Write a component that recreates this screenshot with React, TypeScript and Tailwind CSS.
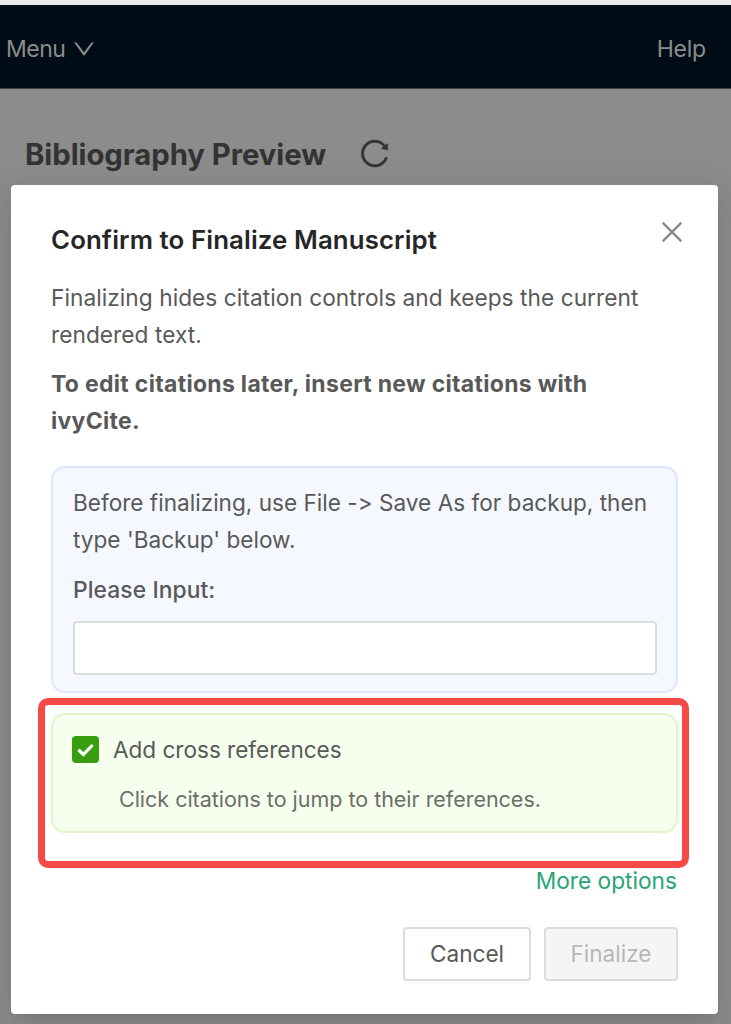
import { AiOutlineClose, AiOutlineDown, AiOutlineReload } from "react-icons/ai";

function Header() {
  return (
    <header className="flex h-[84px] items-center justify-between border-b border-[#3c444b] bg-[#000c17] pl-[6px] pr-[25px] text-[#8c8c8c]">
      <button className="flex items-center gap-[6px] whitespace-nowrap pt-[4px]">
        <span className="pt-px text-[23px] leading-9 tracking-[-0.5px]">Menu</span>
        <AiOutlineDown className="size-[26px]" />
      </button>
      <button className="whitespace-nowrap pt-[5px] text-[23px] leading-9 tracking-[-0.2px]">Help</button>
    </header>
  );
}

function BackupPanel() {
  return (
    <section className="mt-[26px] h-[227px] rounded-[14px] border-2 border-[#dfe6fc] bg-[#f5f8ff] px-[20px] pt-[17px]">
      <p className="whitespace-nowrap text-[22.6px] leading-[36.7px] tracking-[0px] [font-feature-settings:'calt'_0]">
        Before finalizing, use File -&gt; Save As for backup, then
        <br />
        type 'Backup' below.
      </p>
      <label className="mt-[14px] block">
        <span className="block text-[22.8px] font-medium leading-[36.7px] tracking-[0.1px]">Please Input:</span>
        <input className="mt-[12px] block h-[54px] w-[584px] rounded-[4px] border-2 border-[#dcdde0] bg-white px-4 outline-none" />
      </label>
    </section>
  );
}

function CrossReferencePanel() {
  return (
    <section className="relative mt-[20px] h-[120px] rounded-[14px] border-2 border-[#dff6c8] bg-[#f6ffed] px-[19px] pt-[17px]">
      <div className="flex h-[36px] items-center gap-[14px]">
        <span className="flex size-[27px] items-center justify-center rounded-[4px] bg-[#389e0d]">
          <svg viewBox="0 0 27 27" className="size-[27px]" fill="none" stroke="white" strokeWidth="3.2">
            <path d="M6.4 13.8 11.4 18.4 20.6 9" />
          </svg>
        </span>
        <span className="whitespace-nowrap pt-px text-[22.6px] tracking-[-0.03px]">Add cross references</span>
      </div>
      <p className="mt-[13px] whitespace-nowrap pl-[47px] text-[21.5px] leading-9 tracking-[-0.02px] text-[#6b6f68]">
        Click citations to jump to their references.
      </p>
      <div className="pointer-events-none absolute -left-[15px] -right-[13px] -top-[17px] h-[170px] rounded-[10px] border-[7px] border-[#f54a45]" />
    </section>
  );
}

function FinalizeDialog() {
  return (
    <div
      role="dialog"
      className="absolute left-[11px] top-[185px] flex h-[829px] w-[707px] flex-col rounded-[4px] bg-white px-[40px] pt-[37px] text-[#595959] shadow-[0_5px_10px_-7px_rgba(0,0,0,0.12),0_10px_27px_rgba(0,0,0,0.08),0_15px_47px_13px_rgba(0,0,0,0.05)]"
    >
      <div className="flex h-[37px] items-center justify-between">
        <h2 className="whitespace-nowrap text-[25.8px] font-semibold tracking-[0.12px] text-[#262626]">
          Confirm to Finalize Manuscript
        </h2>
        <button aria-label="Close" className="-mr-[9px] -mt-[17px] text-[#8c8c8c]">
          <AiOutlineClose className="size-[30px]" />
        </button>
      </div>
      <p className="mt-[21px] whitespace-nowrap text-[22.7px] leading-[36.7px] tracking-[0.04px]">
        Finalizing hides citation controls and keeps the current
        <br />
        rendered text.
      </p>
      <p className="mt-[13px] whitespace-nowrap text-[23px] font-bold leading-[36.7px] tracking-[0.3px]">
        To edit citations later, insert new citations with
        <br />
        ivyCite.
      </p>
      <BackupPanel />
      <CrossReferencePanel />
      <a className="mr-px mt-[29px] h-[37px] self-end whitespace-nowrap text-[22.7px] leading-[37px] tracking-[0px] text-[#27a577]">
        More options
      </a>
      <div className="mt-[28px] flex justify-end gap-[13px] whitespace-nowrap text-[22.6px]">
        <button className="h-[54px] w-[128px] rounded-[4px] border-2 border-[#dcdcdc] bg-white shadow-[0_3px_0_rgba(0,0,0,0.016)]">
          Cancel
        </button>
        <button disabled className="h-[54px] w-[134px] rounded-[4px] border-2 border-[#dcdcdc] bg-[#f5f5f5] text-[#b8b8b8]">
          Finalize
        </button>
      </div>
    </div>
  );
}

export default function App() {
  return (
    <div className="relative h-[1024px] w-[731px] overflow-hidden bg-[#8c8c8c] pt-[5px] font-['Inter','Liberation_Sans',sans-serif] before:absolute before:inset-x-0 before:top-0 before:h-[5px] before:bg-[#ebecec]">
      <Header />
      <main className="flex items-center gap-[32px] pl-[25px] pt-[46px] text-[#333333]">
        <h1 className="whitespace-nowrap text-[29.3px] font-bold leading-[40px] tracking-[-0.05px]">Bibliography Preview</h1>
        <AiOutlineReload className="-mt-[3px] size-[33px]" stroke="currentColor" strokeWidth="14" />
      </main>
      <FinalizeDialog />
    </div>
  );
}
